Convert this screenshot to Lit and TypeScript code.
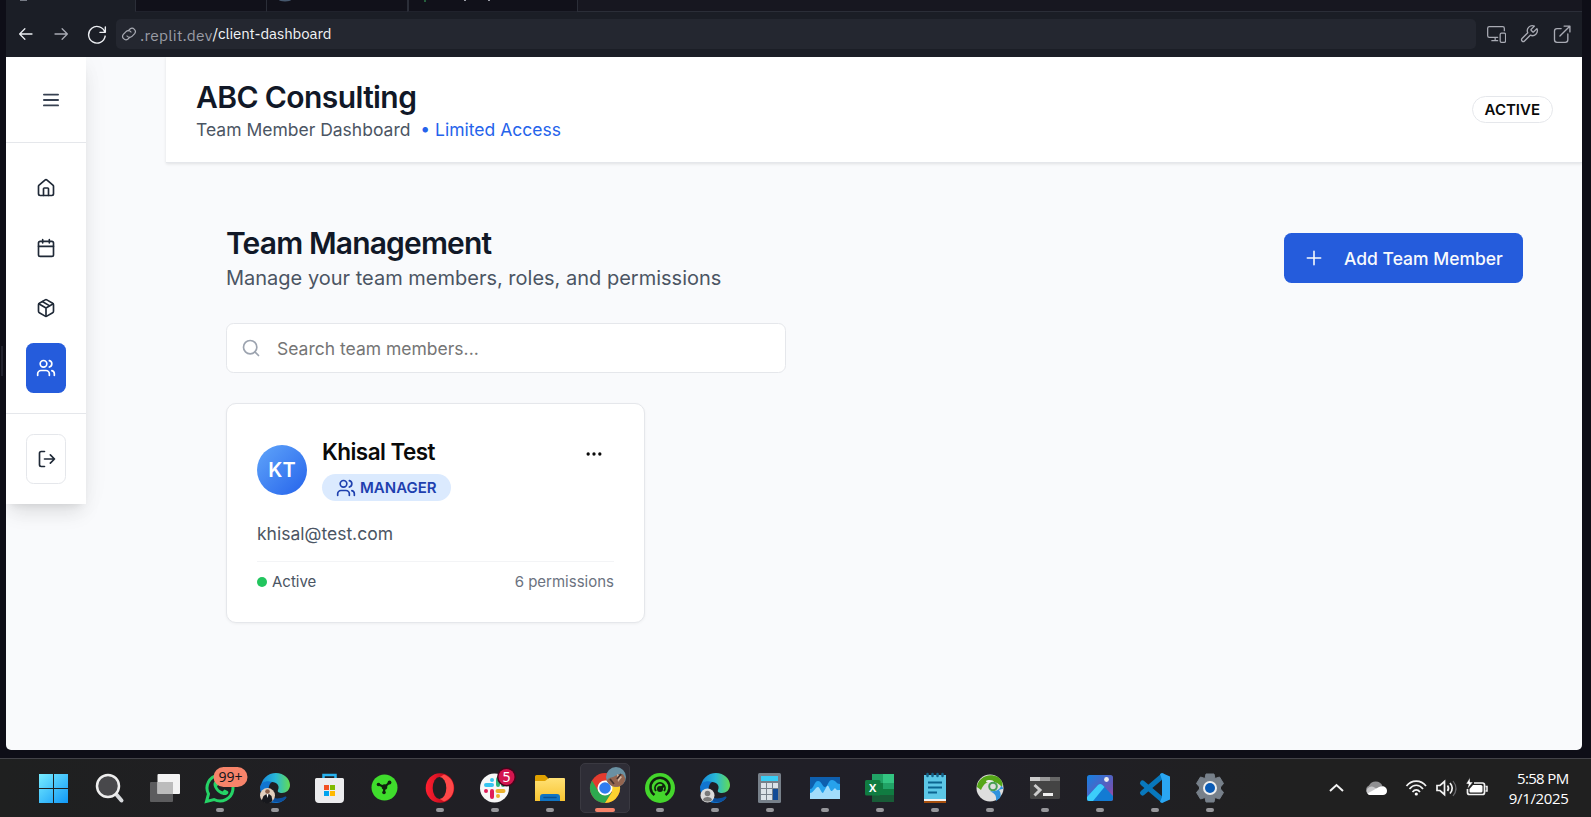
import { LitElement, html, svg, css } from "lit";
import { customElement } from "lit/decorators.js";

const users = svg`<path d="M16 21v-2a4 4 0 0 0-4-4H6a4 4 0 0 0-4 4v2"/><circle cx="9" cy="7" r="4"/><path d="M22 21v-2a4 4 0 0 0-3-3.87"/><path d="M16 3.13a4 4 0 0 1 0 7.75"/>`;
const lucide = (body: unknown, size = 20, w = 2) => html`<svg width=${size} height=${size} viewBox="0 0 24 24" fill="none" stroke="currentColor" stroke-width=${w} stroke-linecap="round" stroke-linejoin="round">${body}</svg>`;

@customElement("browser-bar")
class BrowserBar extends LitElement {
  static styles = css`
    :host { display: block; height: 57px; background: #1b1e26; color: #a9abb4; font-family: "IBM Plex Sans", "Noto Sans", sans-serif; }
    .tabs { display: flex; height: 12px; overflow: hidden; }
    .tab { box-sizing: border-box; background: #11111a; border-left: 1px solid #2b2e38; border-bottom: 1px solid #20222c; flex: none; }
    .t0 { width: 129px; background: #1b1e26; border: 0; }
    .t1 { width: 131px; } .t2 { width: 141px; } .t3 { width: 170px; border-left-width: 2px; }
    .rest { flex: 1; background: #171720; border-bottom-color: #2b2e38; }
    .tab svg { display: block; }
    .row { display: flex; align-items: center; height: 45px; box-sizing: border-box; padding: 0 10px 1px 11px; }
    .nav { display: flex; align-items: center; width: 99px; }
    .nav svg, .tools svg { display: block; }
    .nav .b { color: #eceef2; width: 35px; } .nav .f { width: 35px; } .nav .r { color: #eceef2; }
    .nav, .tools { margin-bottom: 1px; }
    .url { flex: 1; height: 30px; background: #242730; border-radius: 5px; display: flex; align-items: center; font-size: 15px; padding-left: 5px; box-sizing: border-box; }
    .url svg { margin-right: 3px; }
    .host { color: #9a9ca5; font-size: 15.500px; letter-spacing: .25px; position: relative; top: 1px; }
    .path { color: #f2f3f5; letter-spacing: -.1px; position: relative; top: -1px; }
    .tools { display: flex; gap: 13px; margin-left: 10px; }
  `;
  render() {
    return html`
      <div class="tabs">
        <div class="tab t0"><svg width="129" height="12"><path d="M14 0h7" stroke="#777b85" stroke-width="2"/></svg></div>
        <div class="tab t1"></div>
        <div class="tab t2"><svg width="60" height="11"><ellipse cx="18" cy="0" rx="6" ry="1.5" fill="#46586e"/></svg></div>
        <div class="tab t3"><svg width="100" height="11"><path d="M16 0v2" stroke="#2d7a48" stroke-width="1.5"/><path d="M56 0v1M80 0v1" stroke="#9a9ca5" stroke-width="2"/></svg></div>
        <div class="tab rest"></div>
      </div>
      <div class="row">
        <div class="nav">
          <div class="b">${lucide(svg`<path d="M20 12H3.500M10.500 19l-7-7 7-7"/>`, 18, 1.7)}</div>
          <div class="f">${lucide(svg`<path d="M4 12h16.500M13.500 5l7 7-7 7"/>`, 18, 1.7)}</div>
          <div class="r">${lucide(svg`<path d="M22 3.500v6.500h-6.500M21.500 10a10 10 0 1 0 .3 4.500"/>`, 20, 1.7)}</div>
        </div>
        <div class="url">
          ${lucide(svg`<path d="M9 15a5 5 0 0 0 7.500.5l4-4a5 5 0 0 0-7-7L11 7"/><path d="M15 9a5 5 0 0 0-7.500-.5l-4 4a5 5 0 0 0 7 7L13 17"/>`, 16, 1.8)}
          <span class="host">.replit.dev</span><span class="path">/client-dashboard</span>
        </div>
        <div class="tools">
          ${lucide(svg`<path d="M22 8V5a2 2 0 0 0-2-2H4a2 2 0 0 0-2 2v9a2 2 0 0 0 2 2h10M7 20h7M11 16v4"/><rect x="17" y="11" width="6.500" height="11" rx="1.500"/>`, 20, 1.5)}
          ${lucide(svg`<path d="M14.700 6.300a1 1 0 0 0 0 1.400l1.600 1.600a1 1 0 0 0 1.400 0l3.770-3.770a6 6 0 0 1-7.940 7.940l-6.910 6.910a2.120 2.120 0 0 1-3-3l6.910-6.910a6 6 0 0 1 7.940-7.940l-3.760 3.760z"/>`, 20, 1.6)}
          ${lucide(svg`<path d="M14.500 2.500h7v7M21 3L9.500 14.500M19 12v7a3 3 0 0 1-3 3H6a3 3 0 0 1-3-3V8.500a3 3 0 0 1 3-3h5"/>`, 20, 1.6)}
        </div>
      </div>`;
  }
}

@customElement("side-nav")
class SideNav extends LitElement {
  static styles = css`
    :host { display: block; width: 79px; height: 447px; background: #fff; box-shadow: 0 12px 19px -4px #0000001a, 0 5px 8px -5px #0000001a, 0 0 30px #0000000a; color: #1f2937; }
    svg { display: block; }
    .menu { height: 86px; box-sizing: border-box; border-bottom: 1px solid #e5e7eb; display: flex; align-items: center; justify-content: center; padding: 0 0 0 9px; color: #374151; }
    nav { display: flex; flex-direction: column; align-items: center; gap: 10px; padding: 20px 0 20px; border-bottom: 1px solid #e5e7eb; }
    .item { width: 40px; height: 50px; border-radius: 7.500px; display: flex; align-items: center; justify-content: center; box-sizing: border-box; }
    .on { background: #255cdc; color: #fff; }
    .out { border: 1px solid #e5e7eb; margin: 20px auto 0; padding-left: 2px; }
  `;
  render() {
    return html`
      <div class="menu">${lucide(svg`<path d="M3.500 12h17M3.500 5.500h17M3.500 18.500h17"/>`, 20, 2.2)}</div>
      <nav>
        <div class="item">${lucide(svg`<path d="M15 21v-8a1 1 0 0 0-1-1h-4a1 1 0 0 0-1 1v8"/><path d="M3 10a2 2 0 0 1 .709-1.528l7-5.999a2 2 0 0 1 2.582 0l7 5.999A2 2 0 0 1 21 10v9a2 2 0 0 1-2 2H5a2 2 0 0 1-2-2z"/>`)}</div>
        <div class="item">${lucide(svg`<path d="M8 2v4M16 2v4M3 10h18"/><rect width="18" height="18" x="3" y="4" rx="2"/>`)}</div>
        <div class="item">${lucide(svg`<path d="M11 21.730a2 2 0 0 0 2 0l7-4A2 2 0 0 0 21 16V8a2 2 0 0 0-1-1.730l-7-4a2 2 0 0 0-2 0l-7 4A2 2 0 0 0 3 8v8a2 2 0 0 0 1 1.730z"/><path d="M12 22V12M3.300 7L12 12l8.700-5M7.500 4.270l9 5.150"/>`)}</div>
        <div class="item on">${lucide(users)}</div>
      </nav>
      <div class="item out">${lucide(svg`<path d="M9 21H5a2 2 0 0 1-2-2V5a2 2 0 0 1 2-2h4M16 17l5-5-5-5M21 12H9"/>`)}</div>`;
  }
}

@customElement("team-page")
class TeamPage extends LitElement {
  static styles = css`
    :host { display: block; flex: 1; font-family: Inter, sans-serif; }
    h1, h2, h3, p { margin: 0; }
    svg { display: block; }
    header { height: 106px; box-sizing: border-box; background: #fff; border-bottom: 1px solid #e5e7eb; box-shadow: 0 1px 3px #0000001a; display: flex; justify-content: space-between; align-items: center; padding: 0 29px 0 30px; }
    .title { font-size: 30px; line-height: 38px; font-weight: 600; color: #111827; letter-spacing: -.850px; }
    h1.title { letter-spacing: -.6px; }
    .sub { font-size: 17.500px; line-height: 25px; color: #4b5563; padding-top: 1px; }
    h1.title { margin-top: 1px; }
    .lim { color: #2563eb; margin-left: 5px; }
    .pill { border: 1px solid #e5e7eb; border-radius: 99px; font-size: 15px; font-weight: 600; line-height: 25px; padding: 0 12px; color: #0a0a0a; }
    main { padding: 61px 59px 60px 60px; }
    .top { display: flex; justify-content: space-between; align-items: center; height: 68px; }
    .lead { font-size: 20px; line-height: 30px; color: #4b5563; padding-top: 1px; }
    .add { height: 50px; width: 239px; box-sizing: border-box; background: #255cdc; color: #f8fafc; border-radius: 7.500px; display: flex; align-items: center; padding-left: 20px; gap: 20px; font-size: 17.500px; font-weight: 500; }
    .search { width: 560px; height: 50px; box-sizing: border-box; border: 1px solid #e5e7eb; border-radius: 7.500px; background: #fff; display: flex; align-items: center; padding-left: 14px; gap: 16px; margin: 31px 0 30px; font-size: 17.500px; color: #757575; }
    .search svg { color: #9ca3af; }
    .card { width: 419px; height: 220px; box-sizing: border-box; border: 1px solid #e5e7eb; border-radius: 10px; background: #fff; padding: 30px; box-shadow: 0 1px 3px #0000000d; }
    .who { display: flex; align-items: center; height: 70px; }
    .avatar { width: 50px; height: 50px; border-radius: 50%; background: linear-gradient(135deg, #60a5fa, #2563eb); color: #fff; font-size: 20px; font-weight: 600; display: flex; align-items: center; justify-content: center; margin: 1px 15px 0 0; }
    h3 { font-size: 22.500px; line-height: 35px; font-weight: 600; color: #0a0a0a; letter-spacing: -.55px; margin-top: -3px; }
    .role { display: flex; align-items: center; gap: 4.500px; height: 27px; box-sizing: border-box; background: #dbeafe; border-radius: 99px; padding: 0 14px 0 13.500px; color: #1e40af; font-size: 15px; font-weight: 600; margin-top: 5px; }
    .more { margin: 0 10px 30px auto; color: #0a0a0a; }
    .mail { font-size: 17.500px; line-height: 25px; color: #4b5563; margin-top: 17px; }
    .foot { border-top: 1px solid #f3f4f6; margin-top: 15px; padding-top: 10px; display: flex; align-items: center; font-size: 15px; line-height: 20px; color: #4b5563; }
    .dot { width: 10px; height: 10px; border-radius: 50%; background: #22c55e; margin-right: 5px; }
    .perm { margin-left: auto; color: #6b7280; }
  `;
  render() {
    return html`
      <header>
        <div><h1 class="title">ABC Consulting</h1><p class="sub">Team Member Dashboard <span class="lim">• Limited Access</span></p></div>
        <span class="pill">ACTIVE</span>
      </header>
      <main>
        <div class="top">
          <div><h2 class="title">Team Management</h2><p class="lead">Manage your team members, roles, and permissions</p></div>
          <div class="add">${lucide(svg`<path d="M4 12h16M12 4v16"/>`, 20, 1.900)}<span>Add Team Member</span></div>
        </div>
        <div class="search">${lucide(svg`<circle cx="11" cy="11" r="8"/><path d="m21 21-4.300-4.300"/>`)}<span>Search team members...</span></div>
        <div class="card">
          <div class="who">
            <div class="avatar">KT</div>
            <div><h3>Khisal Test</h3><div class="role">${lucide(users)}<span>MANAGER</span></div></div>
            <div class="more">${lucide(svg`<circle cx="12" cy="12" r="1"/><circle cx="19" cy="12" r="1"/><circle cx="5" cy="12" r="1"/>`)}</div>
          </div>
          <p class="mail">khisal@test.com</p>
          <div class="foot"><i class="dot"></i><span>Active</span><span class="perm">6 permissions</span></div>
        </div>
      </main>`;
  }
}

const edge = svg`
  <path d="M1 17C0 6 8 0 16 0c8 0 14 6 14 12 0 5-4 8-8 8-3 0-5-1-4-3 2-4-1-8-6-8C7 9 2 12 1 17z" fill="url(#eg)"/>
  <path d="M0 14c1-5 7-7 12-5-3 2-4 6-3 10 2 7 9 9 15 6 2-1 3-1 2 0-3 4-7 5-10 5C6 30 0 23 0 14z" fill="#1175d0"/>
  <path d="M8 17c0 6 6 11 16 7 3-1 3 0 1 2-4 4-9 4-13 2-4-3-6-8-4-11z" fill="#0c4f9c"/>`;
const icons: { art: unknown; run?: boolean; active?: boolean }[] = [
  { art: svg`<g fill="url(#wn)"><path d="M-1 1h14v14h-14zM14 1h14v14h-14zM-1 16h14v14h-14zM14 16h14v14h-14z"/></g>` },
  { art: svg`<path d="M21 21l5.500 6.500" stroke="#d8dadd" stroke-width="4" stroke-linecap="round"/><circle cx="13" cy="13" r="11" fill="#48484b" stroke="#eee" stroke-width="2.500"/>` },
  { art: svg`<rect x="0" y="9" width="23" height="20" rx="1" fill="#5c5c5e"/><rect x="7.500" y="1" width="22.500" height="20" rx="1" fill="#f3f3f3"/><path d="M7.500 9H23v12H7.500z" fill="#bcbcbc"/>` },
  { run: true, art: svg`<path d="M1.500 28.500l2-7.500A13 13 0 1 1 9 26.500z" fill="#202024" stroke="#25d366" stroke-width="3"/><path d="M9.500 8.500c-4 5 6 16 12.500 13 2-1.500 1.500-3 .5-3.500l-3-1.500-2 2c-3-1-4.500-3-5.500-5l1.500-2-1.500-3.500z" fill="#25d366"/><rect x="8.500" y="-6" width="34" height="20" rx="10" fill="#f6836a"/><text x="25.500" y="9" text-anchor="middle" class="n">99+</text>` },
  { run: true, art: svg`${edge}<circle cx="7.500" cy="22.500" r="7.500" fill="#e2cfbd"/><path d="M1.500 28l2-5 3-2 2.500 0 2.500 2 1 5a7.500 7.500 0 0 1-11 0z" fill="#17181d"/><path d="M6.500 21h2l-1 4z" fill="#fff"/><circle cx="7.500" cy="18.500" r="2.300" fill="#8a5f49"/>` },
  { art: svg`<path d="M8.500 6V2h12v4" fill="none" stroke="#28b3f0" stroke-width="2.500"/><path d="M0 6.500A1.500 1.500 0 0 1 1.500 5h26A1.500 1.500 0 0 1 29 6.500V26a4 4 0 0 1-4 4H4a4 4 0 0 1-4-4z" fill="#ececee"/><path d="M9 12h5v5H9z" fill="#f25022"/><path d="M15 12h5v5h-5z" fill="#7fba00"/><path d="M9 18h5v5H9z" fill="#00a4ef"/><path d="M15 18h5v5h-5z" fill="#ffb900"/>` },
  { art: svg`<circle cx="14.500" cy="14.500" r="13" fill="#3fdc2c"/><path d="M14.500 14L8.500 11.500M14.500 14l4.500-4M14.500 14l-.5 5" stroke="#10210e" stroke-width="2.200" stroke-linecap="round"/><circle cx="14.500" cy="14" r="2.800" fill="#10210e"/><circle cx="8.500" cy="11.500" r="1.800" fill="#10210e"/><circle cx="19.500" cy="9.500" r="1.900" fill="#10210e"/><circle cx="14" cy="19.500" r="1.800" fill="#10210e"/>` },
  { run: true, art: svg`<ellipse cx="15" cy="15" rx="14.300" ry="14.700" fill="url(#op)"/><path d="M15 4l4-2.500c13 4 13 23 0 27L15 26z" fill="#ff4848"/><ellipse cx="14.500" cy="15" rx="6.800" ry="11" fill="#201f23"/>` },
  { run: true, art: svg`<circle cx="14.500" cy="15" r="14.500" fill="#f7f7f7"/><g stroke-width="4" stroke-linecap="round"><path d="M6 12h6M12 7v.1" stroke="#36c5f0"/><path d="M18 6v6M23 12v.1" stroke="#2eb67d"/><path d="M17.500 18h6M18 23v.1" stroke="#ecb22e"/><path d="M12 18v6M6 18v.1" stroke="#e01e5a"/></g><circle cx="26.500" cy="4" r="9.500" fill="#44051c"/><circle cx="26.500" cy="4" r="8" fill="#d3154e"/><text x="26.500" y="8.500" text-anchor="middle" class="n w">5</text>` },
  { run: true, art: svg`<path d="M0 3.500A1.500 1.500 0 0 1 1.500 2H10l3 3v5H0z" fill="#e0a100"/><path d="M0 8h10l4-3h15a1 1 0 0 1 1 1v22H0z" fill="url(#fo)"/><path d="M5 28v-4a3 3 0 0 1 3-3h14a3 3 0 0 1 3 3v4z" fill="#0f74c4"/><path d="M9 24.500h12" stroke="#084f91" stroke-width="1.500" stroke-linecap="round"/>` },
  { run: true, active: true, art: svg`<circle cx="15" cy="15" r="15" fill="#e33b2e"/><path d="M2 7.500A15 15 0 0 0 15 30l7-11-7 3.500-6.500-4z" fill="#2da94f"/><path d="M15 30a15 15 0 0 0 13-22.500H15l7 11.500z" fill="#fdd22f"/><circle cx="15" cy="15" r="7.500" fill="#fff"/><circle cx="15" cy="15" r="5.800" fill="#2f7cf0"/><circle cx="26" cy="4" r="10" fill="#6a91a3"/><path d="M17 8c1-4 5-3 8-5 4-2 8-3 9 0 2 3 1 5-1 8-5 5-13 3-16-3z" fill="#936550"/><path d="M27 1l5 3-4 5z" fill="#d7b9a0"/><path d="M20 6l4 5M31 1l-4 5" stroke="#46332f" stroke-width="1.800"/>` },
  { run: true, art: svg`<circle cx="15" cy="15" r="15" fill="#44d62c"/><path d="M9.500 22a9.500 9.500 0 1 1 11 0M6 21" fill="none" stroke="#10210e" stroke-width="2.500"/><path d="M11 18a5 5 0 1 1 8 0" fill="none" stroke="#10210e" stroke-width="1.800"/><path d="M15 16l4-3.500" stroke="#10210e" stroke-width="2.500"/><circle cx="15" cy="16" r="3" fill="#10210e"/>` },
  { run: true, art: svg`${edge}<circle cx="7.500" cy="22.500" r="7" fill="#dadada"/><circle cx="7.500" cy="20.500" r="2.800" fill="#7a7a7a"/><path d="M3 27c0-4 9-4 9 0-2 2-7 2-9 0z" fill="#7a7a7a"/>` },
  { run: true, art: svg`<rect x="3" y="0" width="23" height="30" rx="1.500" fill="#77808a"/><path d="M6 3h17v5H6z" fill="#39cdf5"/><g fill="#dce2e8"><path d="M6 10h5v5H6zM12 10h5v5h-5zM18 10h5v5h-5zM6 16h5v5H6zM12 16h5v5h-5zM6 22h5v5H6zM12 22h5v5h-5z"/></g><path d="M18 16h5v11h-5z" fill="#134b96"/>` },
  { run: true, art: svg`<rect y="4" width="30" height="22" fill="#0e5fae"/><path d="M0 16c4 0 4-8 8-8s4 6 7 6 3-7 7-7 4 4 8 4v14H0z" fill="#27a2ec"/><path d="M0 20c4 0 5-6 8-6 2 0 3 6 5 6l4-7c2-2 3 6 5 5l3-3c2 3 3 2 5 2v9H0z" fill="#a2dcfb"/>` },
  { run: true, art: svg`<path d="M7 1h22v28H7z" fill="#185c37"/><path d="M7 1h11v9H7z" fill="#21a366"/><path d="M18 1h11v9H18z" fill="#33c481"/><path d="M18 10h11v6H18z" fill="#21a366"/><path d="M7 10h11v12H7z" fill="#107c41"/><path d="M18 16h11v6H18z" fill="#107c41"/><rect y="7" width="15.500" height="15.500" rx="1.500" fill="#107c41"/><text x="7.700" y="19" text-anchor="middle" class="x">X</text>` },
  { run: true, art: svg`<path d="M4 2h22v25H4z" fill="#5cc7e6"/><path d="M4 26h22v2H4z" fill="#f2f2f2"/><path d="M4 28h22v2H4z" fill="#a8500e"/><path d="M8 9.500h14M8 14.500h14M8 19.500h9" stroke="#0b6590" stroke-width="2"/><path d="M7.500 1v2M12.500 1v2M17.500 1v2M22.500 1v2" stroke="#13648a" stroke-width="2.500" stroke-linecap="round"/>` },
  { run: true, art: svg`<circle cx="15" cy="15" r="13.500" fill="#dedede"/><path d="M2 14C3 5 13-1 23 4c5 4 5 7 4 10-3-3-7-6-12-5-5 0-7 4-9 8z" fill="#55a718"/><path d="M11 8c2-2 8-1 8 1-3 0-8 2-8-1z" fill="#eee"/><circle cx="18" cy="13.500" r="3.800" fill="none" stroke="#4a9f55" stroke-width="2"/><path d="M15 18c3 2 7 3 6 10l4-3c1-3 1-5-1-8 2-1 3-1 4-1 0-2-1-3-2-3-1 3-4 6-11 5z" fill="#2e92dd"/>` },
  { run: true, art: svg`<rect y="4" width="30" height="22" rx="1.500" fill="#444"/><path d="M0 4h10v4H0z" fill="#ccc"/><path d="M10 4h10v4H10z" fill="#999"/><path d="M20 4h10v4H20z" fill="#666"/><path d="M4.500 12l5.500 5-5.500 5.500" fill="none" stroke="#ccc" stroke-width="3"/><path d="M13 20h10v3H13z" fill="#eee"/>` },
  { run: true, art: svg`<rect x="2" y="2" width="26" height="26" rx="2.500" fill="url(#ph)"/><path d="M2 24l11-12c1.500-1.500 3-1.500 4.500 0L28 23v2.500a2.500 2.500 0 0 1-2.500 2.500h-21A2.500 2.500 0 0 1 2 25.500z" fill="#137bd3"/><path d="M2 24l11-12c1.500-1.500 3-1.500 4.500 0l2 2L8 28H4.500A2.500 2.500 0 0 1 2 25.500z" fill="#3ccdfa"/><circle cx="21.500" cy="6.500" r="2.400" fill="#eee"/>` },
  { run: true, art: svg`<path d="M2.500 20L22.500 3M2.500 10L22.500 27" stroke="#0878bd" stroke-width="5" stroke-linecap="round"/><path d="M22 0l8 3.500v23L22 30l-2-1 2-5V7l-2-6z" fill="#2aa6f2"/>` },
  { run: true, art: svg`<path d="M11 1h8l1 4.500 4.500-1.500 4 6.500-3 3.500v2l3 3.500-4 6.500-4.500-1.500L19 29h-8l-1-4.500L5.500 26l-4-6.500 3-3.500v-2l-3-3.500 4-6.500L10 5.500z" fill="#77808a" stroke="#77808a" stroke-linejoin="round"/><circle cx="15" cy="15" r="7" fill="#eee"/><circle cx="15" cy="15" r="5" fill="#0a5bb5"/>` },
];

@customElement("task-bar")
class TaskBar extends LitElement {
  static styles = css`
    :host { display: flex; height: 59px; box-sizing: border-box; border-top: 1px solid #434348; background: linear-gradient(90deg, #1f2020, #201f24 25%, #201f28 60%, #202020 80%); padding-left: 27px; font-family: "Open Sans", "Noto Sans", sans-serif; color: #fff; }
    .cell { width: 55px; display: flex; flex-direction: column; align-items: center; padding-top: 4px; height: 54px; box-sizing: border-box; }
    .tile { width: 50px; height: 50px; flex: none; box-sizing: border-box; border: 1px solid transparent; border-radius: 5px; display: flex; flex-direction: column; align-items: center; padding-top: 9px; }
    .active { background: #2e2d36; border-color: #3a3941; }
    svg { display: block; overflow: visible; flex: none; }
    .bar { width: 8px; height: 4px; border-radius: 2px; background: #97979b; margin-top: 5px; flex: none; }
    .active .bar { width: 20px; background: #f6836a; }
    .n { font: 14px "Noto Sans", sans-serif; fill: #17171b; } .w { fill: #fff; }
    .x { font: bold 11px "Open Sans", sans-serif; fill: #fff; }
    .tray { margin: 0 22.500px 0 auto; display: flex; align-items: center; }
    .clock { font-size: 15px; line-height: 20px; text-align: right; width: 81.500px; }
    .time { letter-spacing: -.65px; } .date { letter-spacing: -.35px; }
  `;
  render() {
    return html`
      ${icons.map((i, n) => html`<div class="cell"><div class="tile ${i.active ? "active" : ""}">
        <svg width="30" height="30" viewBox="0 0 30 30">${n === 0 ? this.defs() : ""}${i.art}</svg>
        ${i.run ? html`<i class="bar"></i>` : ""}</div></div>`)}
      <div class="tray">
        <svg width="158" height="24" viewBox="0 0 158 24" fill="none" stroke="#f2f2f2" stroke-width="1.700">
          <path d="M1 15l6.500-6 6.500 6" stroke-width="2"/>
          <g stroke="none"><path d="M42 19a5 5 0 0 1-2-9.500 7.500 7.500 0 0 1 13.500.5l-7 5z" fill="#8f8f91"/><path d="M37.500 15a5 5 0 0 1 8-3.500l8 4-6 3.500H42a5 5 0 0 1-4.500-4z" fill="#c8c8ca"/><path d="M38.500 17.500L50 11c4-2 8 0 8 4 0 2.500-2 4-4 4H42c-1.500 0-2.800-.5-3.500-1.500z" fill="#fff"/></g>
          <path d="M77.500 10c5-6.500 14.500-6.500 19.500 0M80.500 13c4-5 9.500-5 13.500 0M83.500 16c2.300-2.800 5.200-2.800 7.500 0"/><circle cx="87.300" cy="18" r="1.600" fill="#fff" stroke="none"/>
          <path d="M108 9.500h3l4.500-4v13l-4.500-4h-3zM118.500 9.500c1.500 2 1.500 3.500 0 5.500"/><path d="M121 7c3 3.500 3 7 0 10.500"/><path d="M124 5c4 5 4 10 0 15" stroke="#68686c" stroke-width="1.200"/>
          <path d="M145 7h8.500a2 2 0 0 1 2 2v7.500a2 2 0 0 1-2 2h-13a2 2 0 0 1-2-2V13"/><path d="M144 9h8a1.500 1.500 0 0 1 1.500 1.500v4.500a1.500 1.500 0 0 1-1.500 1.500h-10.500a1 1 0 0 1-1-1V13z" fill="#fff" stroke="none"/><path d="M156.500 10.500h1.500v4.500h-1.500" stroke-width="1.500"/><path d="M141 1.500l-4 6.500h2.500l-1 5 5.500-7h-3z" fill="#fff" stroke="#202020" stroke-width=".5"/>
        </svg>
        <div class="clock"><div class="time">5:58 PM</div><div class="date">9/1/2025</div></div>
      </div>`;
  }
  defs() {
    return svg`<defs>
      <linearGradient id="wn" gradientUnits="userSpaceOnUse" x1="0" y1="0" x2="28" y2="30"><stop stop-color="#78edff"/><stop offset="1" stop-color="#1098f7"/></linearGradient>
      <linearGradient id="eg"><stop stop-color="#1787dc"/><stop offset=".5" stop-color="#28b8d8"/><stop offset="1" stop-color="#62dc55"/></linearGradient>
      <linearGradient id="op" x2="1"><stop stop-color="#ff2030"/><stop offset="1" stop-color="#a40014"/></linearGradient>
      <linearGradient id="fo" x2="0" y2="1"><stop stop-color="#ffe175"/><stop offset="1" stop-color="#f8c431"/></linearGradient>
      <linearGradient id="ph" x2="1" y2="1"><stop stop-color="#1481e2"/><stop offset=".7" stop-color="#6a55b5"/><stop offset="1" stop-color="#b54ba0"/></linearGradient>
    </defs>`;
  }
}

@customElement("app-root")
class AppRoot extends LitElement {
  static styles = css`
    :host { display: flex; flex-direction: column; width: 1591px; height: 817px; background: #0e0e17; overflow: hidden; }
    .frame { flex: 1; min-height: 0; display: flex; padding: 0 9px 8px 0; }
    .gutter { width: 6px; display: flex; align-items: center; }
    .grip { width: 2px; height: 30px; background: #22232e; margin-left: 1px; margin-top: -28px; }
    .window { flex: 1; display: flex; flex-direction: column; min-width: 0; }
    .page { flex: 1; min-height: 0; display: flex; background: #f9fafc; border-radius: 0 0 5px 5px; overflow: hidden; }
    side-nav { margin-right: 80px; width: 80px; flex: none; }
  `;
  render() {
    return html`
      <div class="frame">
        <div class="gutter"><div class="grip"></div></div>
        <div class="window"><browser-bar></browser-bar><div class="page"><side-nav></side-nav><team-page></team-page></div></div>
      </div>
      <task-bar></task-bar>`;
  }
}
